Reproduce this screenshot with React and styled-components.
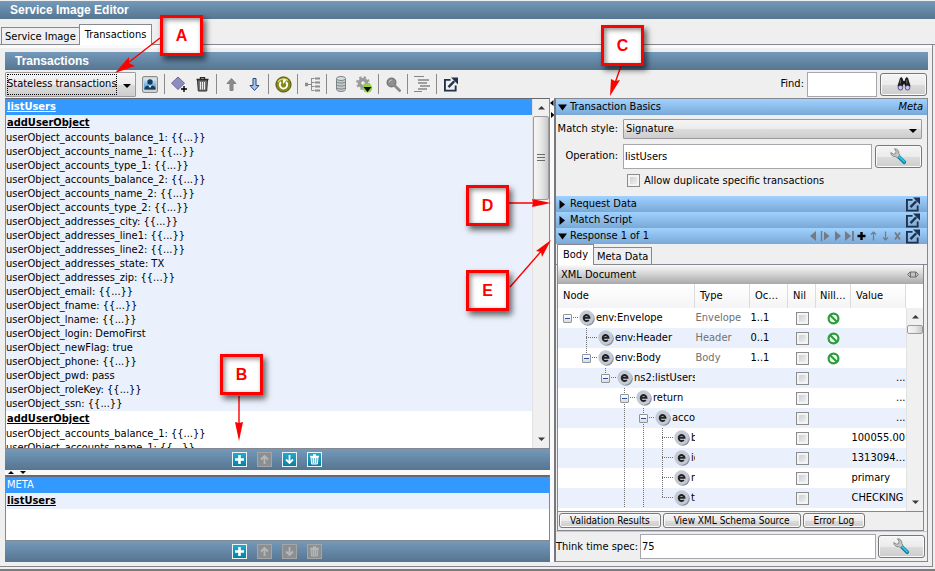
import React from "react";
import styled, { createGlobalStyle, css } from "styled-components";

const GlobalStyle = createGlobalStyle`
  * { box-sizing: border-box; }
  body {
    margin: 0;
    background: #efefef;
    color: #000;
    font: 11px/14px "DejaVu Sans Condensed", "DejaVu Sans", sans-serif;
  }
  button, input, select { font: inherit; color: inherit; margin: 0; }
  svg { display: block; flex: none; }
`;

const steel = "linear-gradient(#7499bb, #567590)";
const sky = "linear-gradient(#a0d2ff, #7aa8d6)";
const gloss = "linear-gradient(#f5f5f5 0%, #ebebeb 50%, #dcdcdc 51%, #cdcdcd 100%)";
const line = "#86888f";

/* ---------- frame ---------- */

const Window = styled.div`
  position: relative;
  display: flex;
  flex-direction: column;
  height: 100vh;
  min-height: 560px;
  padding-top: 1px;
  border-bottom: 2px solid #7c7c7c;
`;

const TitleBar = styled.header`
  flex: none;
  background: ${steel};
  color: #fff;
  font: bold 12px/18px "Liberation Sans", Arial, sans-serif;
  padding: 0 10px;
  height: 18px;
`;

const TabStrip = styled.div`
  display: flex;
  align-items: flex-end;
  flex: none;
  height: ${(p) => (p.$small ? "21px" : "26px")};
  padding-left: 1px;
  box-shadow: inset 0 -1px ${line};
`;

const Tab = styled.button`
  border: 1px solid ${line};
  border-bottom-width: ${(p) => (p.$active ? "0" : "1px")};
  margin-left: ${(p) => (p.$joined ? "-1px" : "0")};
  background: ${(p) => (p.$active ? "#fff" : "#efefef")};
  height: ${(p) => (p.$active ? "21px" : "18px")};
  padding: ${(p) => (p.$active ? "0 5px 1px" : "1px 3px 0")};
  line-height: 14px;
  white-space: nowrap;
`;

const Page = styled.main`
  flex: 1;
  min-height: 0;
  display: flex;
  flex-direction: column;
  margin-right: 2px;
  padding: 4px 4px 4px 5px;
  border-right: 1px solid ${line};
  border-bottom: 1px solid ${line};
  box-shadow: inset 0 3px #fbfbfb;
  margin-bottom: 2px;
`;

const SectionBar = styled(TitleBar)`
  margin-top: 3px;
`;

const Toolbar = styled.div`
  flex: none;
  display: flex;
  align-items: center;
  gap: 6px;
  height: 28px;
  padding-right: 1px;
`;

const Divider = styled.span`
  width: 1px;
  height: 20px;
  background: #8a8a8a;
`;

const ToolButton = styled.button`
  border: 0;
  padding: 0;
  background: none;
  flex: none;
  width: 16px;
  height: 18px;
  display: grid;
  grid-template-columns: 100%;
  place-items: center;
`;

const ToolGroup = styled.div`
  display: flex;
  align-items: center;
  gap: ${(p) => p.$gap || "7px"};
`;

const Spacer = styled.span`
  flex: 1;
`;

/* ---------- controls ---------- */

const SelectWrap = styled.div`
  position: relative;
  display: flex;
  flex: ${(p) => (p.$grow ? "1" : "none")};
  min-width: 0;
`;

const Select = styled.select`
  appearance: none;
  width: ${(p) => (p.$grow ? "100%" : "131px")};
  height: ${(p) => (p.$grow ? "20px" : "25px")};
  padding: ${(p) => (p.$grow ? "0 18px 0 2px" : "0 18px 0 1px")};
  border: 1px solid #9a9a9f;
  border-radius: 1px;
  background: ${gloss};
  outline: none;
`;

const FocusRing = styled.span`
  position: absolute;
  inset: 2px 19px 2px 2px;
  border: 1px dotted #000;
  pointer-events: none;
`;

const SelectArrow = styled.svg`
  position: absolute;
  right: 5px;
  top: 50%;
  pointer-events: none;
`;

const TextBox = styled.input`
  min-width: 0;
  flex: ${(p) => (p.$short ? "0 0 70px" : "1")};
  height: 25px;
  padding: 0 1px;
  border: 1px solid #a6a6ac;
  border-radius: 0;
  background: #fff;
`;

const GlossButton = styled.button`
  flex: none;
  display: grid;
  place-items: center;
  height: ${(p) => (p.$text ? "15px" : "23px")};
  width: ${(p) => (p.$text ? "auto" : "47px")};
  padding: ${(p) => (p.$text ? "0 10px" : "0")};
  font-size: ${(p) => (p.$text ? "10px" : "inherit")};
  line-height: 13px;
  white-space: nowrap;
  border: 1px solid #77777b;
  border-radius: 3px;
  box-shadow: inset 0 0 0 1px #fafafa;
  background: ${gloss};
`;

const CheckBox = styled.input.attrs({ type: "checkbox" })`
  appearance: none;
  display: block;
  flex: none;
  width: 13px;
  height: 13px;
  border: 1px solid #8c8c8c;
  background: linear-gradient(135deg, #c4c8ce, #f6f6f6);
  box-shadow: inset 0 0 0 2px #f4f4f4;
`;

/* ---------- split ---------- */

const Split = styled.div`
  flex: 1;
  min-height: 0;
  display: grid;
  grid-template-columns: minmax(0, 545fr) 4px minmax(0, 374fr);
`;

const LeftColumn = styled.div`
  display: flex;
  flex-direction: column;
  min-height: 0;
`;

const SplitHandle = styled.div`
  display: flex;
  flex-direction: ${(p) => (p.$row ? "row" : "column")};
  gap: 6px;
  padding: ${(p) => (p.$row ? "0 3px" : "2px 0")};
  height: ${(p) => (p.$row ? "5px" : "auto")};
  flex: none;
  background: #fafafa;
`;

const ListBox = styled.div`
  display: flex;
  min-height: 0;
  flex: ${(p) => (p.$grow ? "1" : "none")};
  height: ${(p) => (p.$grow ? "auto" : "66px")};
  border: 1px solid ${line};
  border-top: ${(p) => (p.$grow ? "1px" : "2px")} solid #66686e;
  background: #fff;
`;

const ListScroll = styled.div`
  flex: 1;
  min-width: 0;
  overflow: hidden;
`;

const Item = styled.div`
  white-space: nowrap;
  background: ${(p) => (p.$selected ? "#3399ff" : p.$tint ? "#eaf1fc" : "#fff")};
  color: ${(p) => (p.$selected ? "#fff" : "#000")};
`;

const ItemHead = styled.div`
  padding-left: 1px;
  line-height: 16px;
  font-weight: ${(p) => (p.$plain ? "normal" : "bold")};
  text-decoration: ${(p) => (p.$plain ? "none" : "underline")};
`;

const ActionBar = styled.div`
  flex: none;
  display: flex;
  justify-content: center;
  align-items: center;
  gap: 10px;
  height: 21px;
  padding-right: 2px;
  background: ${steel};
`;

const ActionButton = styled.button`
  width: 15px;
  height: 15px;
  padding: 0;
  display: grid;
  place-items: center;
  color: #fff;
  border: 1px solid #e8f4f8;
  background: linear-gradient(#25a9cb, #0a7fa3);
  &:disabled {
    color: #b4b8bb;
    border-color: #a3a5a7;
    background: #8c8f91;
  }
`;

/* ---------- scroll bar ---------- */

const ScrollTrack = styled.div`
  flex: none;
  display: flex;
  flex-direction: column;
  width: 17px;
  background: #f0f0f0;
  border-left: 1px solid #e2e2e2;
`;

const ScrollEnd = styled.button`
  flex: none;
  height: 17px;
  border: 0;
  padding: 0;
  background: none;
  display: grid;
  place-items: center;
`;

const ScrollThumb = styled.div`
  flex: none;
  height: ${(p) => (p.$long ? "84px" : "9px")};
  border: 1px solid #9b9b9b;
  border-radius: 2px;
  background: linear-gradient(90deg, #f6f6f6, #e8e8e8 50%, #c8c8cc);
  display: grid;
  place-items: center;
`;

/* ---------- right panel ---------- */

const RightPanel = styled.div`
  display: flex;
  flex-direction: column;
  min-height: 0;
  border: 1px solid ${line};
  border-left: 2px solid #77797f;
`;

const FoldBar = styled.div`
  flex: none;
  display: flex;
  align-items: center;
  height: 16px;
  padding: 0 4px 0 2px;
  background: ${sky};
`;

const FoldToggle = styled.button`
  display: flex;
  align-items: center;
  gap: 3px;
  padding: 0;
  border: 0;
  background: none;
  line-height: 16px;
`;

const FoldAction = styled.button`
  margin-right: 3px;
  padding: 0;
  border: 0;
  background: none;
`;

const MetaLink = styled.a`
  color: #000;
  font-style: italic;
  text-decoration: none;
`;

const NavTools = styled.div`
  display: flex;
  align-items: center;
  gap: 1px;
  margin-right: 3px;
`;

const NavButton = styled.button`
  width: 11px;
  height: 14px;
  padding: 0;
  border: 0;
  background: none;
  display: grid;
  place-items: center;
`;

const Form = styled.div`
  flex: none;
  display: grid;
  grid-template-columns: 62px minmax(0, 1fr);
  gap: 4px 5px;
  align-items: center;
  padding: 3px 5px 8px 0;
  height: 81px;
`;

const FieldLabel = styled.label`
  text-align: right;
  white-space: nowrap;
`;

const FieldRow = styled.div`
  display: flex;
  align-items: center;
  gap: 3px;
  min-width: 0;
`;

const CheckLabel = styled.label`
  display: flex;
  align-items: center;
  gap: 4px;
  padding-left: 4px;
`;

const Document = styled.div`
  flex: 1;
  min-height: 0;
  display: flex;
  flex-direction: column;
  margin: 0 3px 0 1px;
  border: 1px solid ${line};
  border-top: 0;
`;

const DocumentTitle = styled.div`
  flex: none;
  display: flex;
  align-items: center;
  justify-content: space-between;
  height: 19px;
  padding: 0 4px 0 3px;
  background: linear-gradient(#fafafa, #a9a9ab);
`;

const Tree = styled.div`
  flex: 1;
  min-height: 0;
  display: flex;
  background: #fff;
  border-bottom: 1px solid ${line};
`;

const TreeBody = styled.div`
  flex: 1;
  min-width: 0;
  overflow: hidden;
`;

const TreeSide = styled.div`
  flex: none;
  display: flex;
  padding-top: 24px;
`;

const Table = styled.table`
  width: 100%;
  table-layout: fixed;
  border-collapse: collapse;
`;

const Th = styled.th`
  width: ${(p) => p.$width};
  height: 24px;
  padding: ${(p) => (p.$snug ? "0 0 0 4px" : "0 4px 0 5px")};
  font-weight: normal;
  text-align: left;
  white-space: nowrap;
  overflow: hidden;
  text-overflow: ellipsis;
  border-right: 1px solid #dcdcdc;
  background: linear-gradient(#fff, #f4f4f6);
`;

const Tr = styled.tr`
  height: 20px;
  background: ${(p) => (p.$tint ? "#eaf1fc" : "#fff")};
`;

const Td = styled.td`
  height: 20px;
  padding: 0 0 0 1px;
  white-space: nowrap;
  overflow: hidden;
  text-align: ${(p) => p.$align || "left"};
  text-overflow: ellipsis;
  color: ${(p) => (p.$dim ? "#707070" : "#000")};
  input, svg { margin: 0 auto; }
`;

const NodeCell = styled(Td)`
  padding: 0;
  text-overflow: clip;
`;

const NodeLine = styled.div`
  display: flex;
  align-items: center;
  height: 20px;
  overflow: hidden;
`;

const dots = "#6f6f6f";

const Guide = styled.span`
  position: relative;
  flex: none;
  display: grid;
  place-items: center;
  width: 19px;
  height: 20px;
  ${(p) =>
    p.$down &&
    css`
      &::before {
        content: "";
        position: absolute;
        left: 9px;
        top: 0;
        width: 1px;
        height: ${p.$down === "half" ? "10px" : "20px"};
        background: repeating-linear-gradient(${dots} 0 1px, transparent 1px 2px);
      }
    `}
  ${(p) =>
    p.$across &&
    css`
      &::after {
        content: "";
        position: absolute;
        left: 9px;
        top: 9px;
        width: 11px;
        height: 1px;
        background: repeating-linear-gradient(90deg, ${dots} 0 1px, transparent 1px 2px);
      }
    `}
`;

const Expander = styled.button`
  position: relative;
  z-index: 1;
  width: 9px;
  height: 9px;
  padding: 0;
  display: grid;
  place-items: center;
  border: 1px solid #8f959c;
  border-radius: 1px;
  background: linear-gradient(#fff, #dcdcdc);
`;

const ButtonRow = styled.div`
  flex: none;
  display: flex;
  gap: 2px;
  padding: 1px;
  height: 18px;
`;

const ThinkTime = styled.div`
  flex: none;
  display: flex;
  align-items: center;
  gap: 2px;
  height: 30px;
  padding-right: 2px;
  border-top: 1px solid #c8c8c8;
`;

const ThinkLabel = styled.label`
  white-space: nowrap;
`;

/* ---------- callouts ---------- */

const Annotations = styled.div`
  position: absolute;
  inset: 0;
  pointer-events: none;
`;

const Arrows = styled.svg`
  position: absolute;
  left: 0;
  top: 0;
`;

const Callout = styled.span`
  position: absolute;
  left: ${(p) => p.$x}px;
  top: ${(p) => p.$y}px;
  width: 43px;
  height: 41px;
  display: grid;
  place-items: center;
  border: 3px solid #f00;
  background: #fff;
  box-shadow: inset 2px 2px 5px rgba(0, 0, 0, 0.45), 3px 4px 6px rgba(0, 0, 0, 0.6);
  color: #f00;
  font: bold 16px/20px "Liberation Sans", Arial, sans-serif;
`;

/* ---------- icons ---------- */

const Triangle = ({ down }) => (
  <svg width="9" height="9" viewBox="0 0 9 9">
    <path d={down ? "M0 1.5h9L4.5 7.5z" : "M1.5 0v9L7 4.5z"} />
  </svg>
);

const SmallTriangle = ({ dir }) => (
  <svg width="6" height="6" viewBox="0 0 6 6">
    <path
      d={{ up: "M0 4h6L3 1z", down: "M0 1h6L3 4z", left: "M3.5 0v6L0 3z", right: "M1 0v6l3.5-3z" }[dir]}
    />
  </svg>
);

const ScrollArrow = ({ up }) => (
  <svg width="7" height="5" viewBox="0 0 7 5">
    <path fill="#3a3a3a" d={up ? "M0 4.5h7L3.5 1z" : "M0 .5h7L3.5 4z"} />
  </svg>
);

const UserIcon = () => (
  <svg width="16" height="17" viewBox="0 0 16 17">
    <defs>
      <linearGradient id="user" x2="0" y2="1">
        <stop offset="0" stopColor="#d6eefa" />
        <stop offset="1" stopColor="#3a8cc4" />
      </linearGradient>
    </defs>
    <rect x=".5" y=".5" width="15" height="16" rx="1.5" fill="#d2d2d2" stroke="#8b8b8b" />
    <rect x="2" y="2.500" width="12" height="11" fill="url(#user)" />
    <circle cx="8" cy="6" r="2.700" fill="#17395f" />
    <path d="M2.500 13.500c0-3 2-4.300 5.500-4.300s5.500 1.300 5.500 4.300z" fill="#17395f" />
    <path d="M6 9.300h4L8 12z" fill="#d9eef9" />
  </svg>
);

const AddNodeIcon = () => (
  <svg width="17" height="17" viewBox="0 0 17 17">
    <path d="M7 1l6.500 6.200L7 13.500.5 7.200z" fill="#8e8cbc" stroke="#69679c" />
    <path d="M13 10v6M10 13h6" stroke="#efefef" strokeWidth="3" />
    <path d="M13 10v6M10 13h6" stroke="#000" strokeWidth="1.400" />
  </svg>
);

const TrashIcon = () => (
  <svg width="13" height="15" viewBox="0 0 13 15" fill="none" stroke="#2b2b2b">
    <path d="M.5 2.500h12M4.500 2V.6h4V2" strokeWidth="1.300" />
    <path d="M1.500 3l.8 11h8.400l.8-11z" fill="#777" />
    <path d="M4.500 5v7.500M6.500 5v7.500M8.500 5v7.500" stroke="#eee" />
  </svg>
);

const BlockArrow = ({ up, active }) => (
  <svg width="13" height="15" viewBox="0 0 13 15">
    <path
      d={up ? "M6.500 1.500L2 6.500h3v7h3v-7h3z" : "M6.500 13.500L2 8.500h3v-7h3v7h3z"}
      fill={active ? "#a9c5ec" : "#8c8c8c"}
      stroke={active ? "#26457f" : "#838383"}
    />
  </svg>
);

const RefreshIcon = () => (
  <svg width="17" height="17" viewBox="0 0 17 17">
    <circle cx="8.500" cy="8.500" r="7.600" fill="#85881a" stroke="#4f520f" />
    <path d="M3 6a6.500 6.500 0 0 1 10-1.500" fill="none" stroke="#d6da74" strokeWidth="1.300" />
    <path d="M11 6a3.700 3.700 0 1 1-5 0" fill="none" stroke="#fff" strokeWidth="1.900" />
    <path d="M7.800 3l3.800.8L8.200 8z" fill="#fff" />
  </svg>
);

const HierarchyIcon = () => (
  <svg width="15" height="15" viewBox="0 0 15 15" stroke="#8c8c8c" fill="none">
    <path d="M3 7.500h4M6.500 1v12.500M6.500 1.500h3M6.500 5.500h3M6.500 9.500h3M6.500 13.500h3" />
    <path d="M10 1.500h5M10 5.500h5M10 9.500h5M10 13.500h5" strokeWidth="1.800" />
    <path d="M0 7.500h3" strokeWidth="3.500" />
  </svg>
);

const DatabaseIcon = () => (
  <svg width="10" height="16" viewBox="0 0 10 16" stroke="#7d8485">
    <path d="M.5 2.500v11c0 1 2 2 4.500 2s4.500-1 4.500-2v-11z" fill="#c3cacb" />
    <path d="M.5 5.500c0 1 2 1.500 4.500 1.500s4.500-.5 4.500-1.500M.5 8.500C.5 9.500 2.500 10 5 10s4.500-.5 4.500-1.500M.5 11.500c0 1 2 1.500 4.500 1.500s4.500-.5 4.500-1.500" fill="none" />
    <ellipse cx="5" cy="2.500" rx="4.500" ry="2" fill="#d9dede" />
  </svg>
);

const GearIcon = () => (
  <svg width="17" height="17" viewBox="0 0 17 17">
    <circle cx="7" cy="7" r="5.500" fill="none" stroke="#9b9b9b" strokeWidth="2.800" strokeDasharray="2.200 2.120" />
    <circle cx="7" cy="7" r="3.500" fill="none" stroke="#9b9b9b" strokeWidth="3.400" />
    <circle cx="11.500" cy="12" r="4.700" fill="#90d33a" />
    <path d="M7.500 11h8l-4 5z" />
  </svg>
);

const SearchIcon = () => (
  <svg width="15" height="15" viewBox="0 0 15 15">
    <circle cx="5.500" cy="5.500" r="4.300" fill="#8f8f8f" stroke="#7b7b7b" strokeWidth="1.400" />
    <path d="M3.300 5a2.500 2.500 0 0 1 2.500-2" fill="none" stroke="#ccc" />
    <path d="M9 9l4.600 4.600" stroke="#8b8b8b" strokeWidth="2.800" strokeLinecap="round" />
  </svg>
);

const OutlineIcon = () => (
  <svg width="17" height="16" viewBox="0 0 17 16" stroke="#858585">
    <path d="M0 .5h10M0 15.500h8" />
    <path d="M4 4h11M4 7h9M6 10h10M4 13h9" strokeWidth="1.400" />
  </svg>
);

const PopOutIcon = () => (
  <svg width="14" height="15" viewBox="0 0 15 15" fill="none" stroke="#22304a" strokeWidth="2">
    <path d="M7 2.500H1v11.500h11.500V8.500" />
    <path d="M4.800 10.200L11 4" strokeWidth="2.600" />
    <path d="M7.500 0H15v7.500z" fill="#22304a" stroke="none" />
  </svg>
);

const BinocularsIcon = () => (
  <svg width="14" height="14" viewBox="0 0 15 15">
    <path d="M3 1.500L4.500 0 6.300 2l.3 8H.4L2 5zM12 1.500L10.500 0 8.700 2l-.3 8h6.200L13 5z" fill="#1b1b1b" />
    <path d="M6 4h3v4H6z" fill="#1b1b1b" />
    <path d="M3.500 3v4M10.500 3v4" stroke="#777" />
    <circle cx="3.700" cy="11.500" r="2.500" fill="#c9c6ee" stroke="#4c4880" />
    <circle cx="11.300" cy="11.500" r="2.500" fill="#c9c6ee" stroke="#4c4880" />
  </svg>
);

const WrenchIcon = () => (
  <svg width="17" height="17" viewBox="0 0 17 17">
    <path d="M9 9l5.200 5.200" stroke="#0c7fa0" strokeWidth="3.800" strokeLinecap="round" />
    <path d="M9 8.500l5.200 5.200" stroke="#2fc4e6" strokeWidth="1.800" strokeLinecap="round" />
    <path d="M4.500.8a4 4 0 0 1 4.300 4.700L10 7.200 7.500 9.700 5.500 8.600A4 4 0 0 1 .8 4.500l2.600 1.700 2.300-.6.3-2.300z" fill="#c3c7c8" stroke="#73797b" strokeWidth=".8" />
  </svg>
);

const ElementIcon = () => (
  <svg width="16" height="16" viewBox="0 0 16 16">
    <circle cx="8.800" cy="8.800" r="7" fill="#8b909a" />
    <circle cx="7.600" cy="7.600" r="7.300" fill="#c3cad6" />
    <path d="M4.700 7.700h5.800a2.900 3 0 1 0-.7 2.300" fill="none" stroke="#222" strokeWidth="1.900" />
  </svg>
);

const ForbiddenIcon = () => (
  <svg width="13" height="13" viewBox="0 0 13 13" fill="none" stroke="#2c9c3c" strokeWidth="2.200">
    <circle cx="6.500" cy="6.500" r="4.900" fill="#f2fff2" />
    <path d="M3.200 3.200l6.600 6.600" />
  </svg>
);

const CapsuleIcon = () => (
  <svg width="12" height="7" viewBox="0 0 12 7" fill="#c2c2c2" stroke="#6e6e6e">
    <path d="M.6 3.500L3 1h6l2.400 2.500L9 6H3z" />
    <path d="M3.500 1v5M8.500 1v5" />
  </svg>
);

const Glyph = ({ d, width = 2 }) => (
  <svg width="11" height="11" viewBox="0 0 11 11" fill="none" stroke="currentColor" strokeWidth={width}>
    <path d={d} />
  </svg>
);

const BinGlyph = () => (
  <svg width="11" height="11" viewBox="0 0 11 11" fill="none" stroke="currentColor">
    <path d="M1 2.500h9M4 1h3" strokeWidth="1.400" />
    <path d="M2 3.500l.6 6.500h5.800L9 3.500z" fill="currentColor" fillOpacity=".45" />
    <path d="M4.500 4v5M6.500 4v5" />
  </svg>
);

const NavIcon = ({ shape }) => (
  <svg width="11" height="12" viewBox="0 0 11 12" fill="none" stroke="#757a82" strokeWidth="1.400">
    {shape === "prev" && <path d="M8 1v10L2 6z" fill="#757a82" stroke="none" />}
    {shape === "step" && (
      <>
        <path d="M1.500 1v10" />
        <path d="M4 1.500v9L9.500 6z" fill="#757a82" stroke="none" />
      </>
    )}
    {shape === "next" && <path d="M3 1v10l6-5z" fill="#757a82" stroke="none" />}
    {shape === "last" && (
      <>
        <path d="M1 1v10l6-5z" fill="#757a82" stroke="none" />
        <path d="M9 1v10" strokeWidth="1.800" />
      </>
    )}
    {shape === "add" && <path d="M5.500 2v8M1.500 6h8" stroke="#000" strokeWidth="2.400" />}
    {shape === "up" && <path d="M5.500 10.500V2.500M3 4.500L5.500 2 8 4.500" strokeWidth="1.200" />}
    {shape === "down" && <path d="M5.500 1.500v8M3 7.500L5.500 10 8 7.500" strokeWidth="1.200" />}
    {shape === "remove" && <path d="M3 2.500l5 7M8 2.500l-5 7" strokeWidth="1.800" />}
  </svg>
);

/* ---------- data ---------- */

const userFields = [
  "userObject_accounts_balance_1: {{...}}",
  "userObject_accounts_name_1: {{...}}",
  "userObject_accounts_type_1: {{...}}",
  "userObject_accounts_balance_2: {{...}}",
  "userObject_accounts_name_2: {{...}}",
  "userObject_accounts_type_2: {{...}}",
  "userObject_addresses_city: {{...}}",
  "userObject_addresses_line1: {{...}}",
  "userObject_addresses_line2: {{...}}",
  "userObject_addresses_state: TX",
  "userObject_addresses_zip: {{...}}",
  "userObject_email: {{...}}",
  "userObject_fname: {{...}}",
  "userObject_lname: {{...}}",
  "userObject_login: DemoFirst",
  "userObject_newFlag: true",
  "userObject_phone: {{...}}",
  "userObject_pwd: pass",
  "userObject_roleKey: {{...}}",
  "userObject_ssn: {{...}}",
];

const transactions = [
  { name: "addUserObject", fields: userFields },
  { name: "addUserObject", fields: userFields.slice(0, 2) },
];

/* guides: one entry per indent level — "" blank, "full" passing line, "half" line that ends at this row */
const nodes = [
  { name: "env:Envelope", type: "Envelope", occurs: "1..1", nillable: true, guides: [""], open: true },
  { name: "env:Header", type: "Header", occurs: "0..1", nillable: true, guides: ["", "full"] },
  { name: "env:Body", type: "Body", occurs: "1..1", nillable: true, guides: ["", "half"], open: true },
  { name: "ns2:listUsers", guides: ["", "", "half"], open: true, more: true },
  { name: "return", guides: ["", "", "", "full"], open: true, more: true },
  { name: "accounts", guides: ["", "", "", "full", "full"], open: true, more: true },
  { name: "balance", guides: ["", "", "", "full", "full", "full"], value: "100055.00" },
  { name: "id", guides: ["", "", "", "full", "full", "full"], value: "1313094586" },
  { name: "name", guides: ["", "", "", "full", "full", "full"], value: "primary" },
  { name: "type", guides: ["", "", "", "full", "full", "half"], value: "CHECKING" },
];

/* ---------- parts ---------- */

const ScrollBar = ({ long }) => (
  <ScrollTrack>
    <ScrollEnd aria-label="Scroll up">
      <ScrollArrow up />
    </ScrollEnd>
    <ScrollThumb $long={long}>
      {long && (
        <svg width="8" height="8" viewBox="0 0 8 8" stroke="#6a6a6a">
          <path d="M0 .5h8M0 3.500h8M0 6.500h8" />
        </svg>
      )}
    </ScrollThumb>
    <Spacer />
    <ScrollEnd aria-label="Scroll down">
      <ScrollArrow />
    </ScrollEnd>
  </ScrollTrack>
);

const Actions = ({ movable }) => (
  <ActionBar>
    <ActionButton aria-label="Add">
      <Glyph d="M5.500 1v9M1 5.500h9" width={2.6} />
    </ActionButton>
    <ActionButton aria-label="Move up" disabled>
      <Glyph d="M5.500 10V2M2 5.500L5.500 2 9 5.500" width={1.8} />
    </ActionButton>
    <ActionButton aria-label="Move down" disabled={!movable}>
      <Glyph d="M5.500 1v8M2 5.500L5.500 9 9 5.500" width={1.8} />
    </ActionButton>
    <ActionButton aria-label="Delete" disabled={!movable}>
      <BinGlyph />
    </ActionButton>
  </ActionBar>
);

const Fold = ({ title, open, children }) => (
  <FoldBar>
    <FoldToggle aria-expanded={!!open}>
      <Triangle down={open} />
      {title}
    </FoldToggle>
    <Spacer />
    {children}
  </FoldBar>
);

const FoldPopOut = () => (
  <FoldAction aria-label="Open in window">
    <PopOutIcon />
  </FoldAction>
);

const NodeRow = ({ node, tint }) => (
  <Tr $tint={tint}>
    <NodeCell>
      <NodeLine>
        {node.guides.map((g, i) => {
          const last = i === node.guides.length - 1;
          return (
            <Guide key={i} $down={g} $across={last}>
              {last && node.open && (
                <Expander aria-label="Collapse">
                  <svg width="5" height="1" viewBox="0 0 5 1">
                    <path d="M0 .5h5" stroke="#2b4fa0" />
                  </svg>
                </Expander>
              )}
            </Guide>
          );
        })}
        <Guide>
          <ElementIcon />
        </Guide>
        {node.name}
      </NodeLine>
    </NodeCell>
    <Td $dim>{node.type}</Td>
    <Td>{node.occurs}</Td>
    <Td>
      <CheckBox aria-label={`${node.name} nil`} />
    </Td>
    <Td>{node.nillable && <ForbiddenIcon />}</Td>
    <Td $align={node.more ? "right" : "left"}>{node.more ? "..." : node.value}</Td>
  </Tr>
);

const navShapes = ["prev", "step", "next", "last", "add", "up", "down", "remove"];

export default function App() {
  return (
    <Window>
      <GlobalStyle />
      <TitleBar>Service Image Editor</TitleBar>
      <TabStrip>
        <Tab>Service Image</Tab>
        <Tab $active $joined>
          Transactions
        </Tab>
      </TabStrip>
      <Page>
        <SectionBar as="div">Transactions</SectionBar>
        <Toolbar>
          <SelectWrap>
            <Select aria-label="Transaction kind" defaultValue="s">
              <option value="s">Stateless transactions</option>
            </Select>
            <FocusRing />
            <SelectArrow width="8" height="4" viewBox="0 0 8 4">
              <path d="M0 0h8L4 4z" />
            </SelectArrow>
          </SelectWrap>
          <ToolButton aria-label="User">
            <UserIcon />
          </ToolButton>
          <Divider />
          <ToolGroup>
            <ToolButton aria-label="Add transaction">
              <AddNodeIcon />
            </ToolButton>
            <ToolButton aria-label="Delete transaction">
              <TrashIcon />
            </ToolButton>
          </ToolGroup>
          <Divider />
          <ToolGroup>
            <ToolButton aria-label="Move up">
              <BlockArrow up />
            </ToolButton>
            <ToolButton aria-label="Move down">
              <BlockArrow active />
            </ToolButton>
          </ToolGroup>
          <Divider />
          <ToolButton aria-label="Regenerate">
            <RefreshIcon />
          </ToolButton>
          <Divider />
          <ToolButton aria-label="Hierarchy">
            <HierarchyIcon />
          </ToolButton>
          <Divider />
          <ToolGroup>
            <ToolButton aria-label="Database">
              <DatabaseIcon />
            </ToolButton>
            <ToolButton aria-label="Settings">
              <GearIcon />
            </ToolButton>
          </ToolGroup>
          <Divider />
          <ToolButton aria-label="Inspect">
            <SearchIcon />
          </ToolButton>
          <Divider />
          <ToolButton aria-label="Outline">
            <OutlineIcon />
          </ToolButton>
          <Divider />
          <ToolButton aria-label="Open in window">
            <PopOutIcon />
          </ToolButton>
          <Spacer />
          <ToolGroup $gap="3px">
            <label htmlFor="find">Find:</label>
            <TextBox id="find" $short />
            <GlossButton aria-label="Find">
              <BinocularsIcon />
            </GlossButton>
          </ToolGroup>
        </Toolbar>
        <Split>
          <LeftColumn>
            <ListBox $grow>
              <ListScroll>
                <Item $selected>
                  <ItemHead>listUsers</ItemHead>
                </Item>
                {transactions.map((t, i) => (
                  <Item key={i} $tint={i % 2 === 0}>
                    <ItemHead>{t.name}</ItemHead>
                    {t.fields.map((f) => (
                      <div key={f}>{f}</div>
                    ))}
                  </Item>
                ))}
              </ListScroll>
              <ScrollBar long />
            </ListBox>
            <Actions movable />
            <SplitHandle $row>
              <SmallTriangle dir="up" />
              <SmallTriangle dir="down" />
            </SplitHandle>
            <ListBox>
              <ListScroll>
                <Item $selected>
                  <ItemHead $plain>META</ItemHead>
                </Item>
                <Item $tint>
                  <ItemHead>listUsers</ItemHead>
                </Item>
              </ListScroll>
            </ListBox>
            <Actions />
          </LeftColumn>
          <SplitHandle>
            <SmallTriangle dir="left" />
            <SmallTriangle dir="right" />
          </SplitHandle>
          <RightPanel>
            <Fold title="Transaction Basics" open>
              <MetaLink href="#meta">Meta</MetaLink>
            </Fold>
            <Form>
              <FieldLabel htmlFor="style">Match style:</FieldLabel>
              <SelectWrap $grow>
                <Select id="style" $grow defaultValue="sig">
                  <option value="sig">Signature</option>
                </Select>
                <SelectArrow width="8" height="4" viewBox="0 0 8 4">
                  <path d="M0 0h8L4 4z" />
                </SelectArrow>
              </SelectWrap>
              <FieldLabel htmlFor="operation">Operation:</FieldLabel>
              <FieldRow>
                <TextBox id="operation" defaultValue="listUsers" />
                <GlossButton aria-label="Edit operation">
                  <WrenchIcon />
                </GlossButton>
              </FieldRow>
              <span />
              <CheckLabel>
                <CheckBox />
                Allow duplicate specific transactions
              </CheckLabel>
            </Form>
            <Fold title="Request Data">
              <FoldPopOut />
            </Fold>
            <Fold title="Match Script">
              <FoldPopOut />
            </Fold>
            <Fold title="Response 1 of 1" open>
              <NavTools>
                {navShapes.map((s) => (
                  <NavButton key={s} aria-label={s}>
                    <NavIcon shape={s} />
                  </NavButton>
                ))}
              </NavTools>
              <FoldPopOut />
            </Fold>
            <TabStrip $small>
              <Tab $active>Body</Tab>
              <Tab $joined>Meta Data</Tab>
            </TabStrip>
            <Document>
              <DocumentTitle>
                XML Document
                <CapsuleIcon />
              </DocumentTitle>
              <Tree>
                <TreeBody>
                  <Table>
                    <thead>
                      <tr>
                        <Th>Node</Th>
                        <Th $width="55px">Type</Th>
                        <Th $width="38px">Occurs</Th>
                        <Th $width="28px">Nil</Th>
                        <Th $width="35px" $snug>Nillable</Th>
                        <Th $width="55px">Value</Th>
                      </tr>
                    </thead>
                    <tbody>
                      {nodes.map((n, i) => (
                        <NodeRow key={n.name} node={n} tint={i % 2 === 1} />
                      ))}
                    </tbody>
                  </Table>
                </TreeBody>
                <TreeSide>
                  <ScrollBar />
                </TreeSide>
              </Tree>
              <ButtonRow>
                <GlossButton $text>Validation Results</GlossButton>
                <GlossButton $text>View XML Schema Source</GlossButton>
                <GlossButton $text>Error Log</GlossButton>
              </ButtonRow>
            </Document>
            <ThinkTime>
              <ThinkLabel htmlFor="think">Think time spec:</ThinkLabel>
              <TextBox id="think" defaultValue="75" />
              <GlossButton aria-label="Edit think time">
                <WrenchIcon />
              </GlossButton>
            </ThinkTime>
          </RightPanel>
        </Split>
      </Page>
      <Annotations>
        <Arrows width="935" height="571" viewBox="0 0 935 571" stroke="#f00" fill="#f00" strokeWidth="1.4">
          <path d="M160 38L124 66M621 66l-7 20M239 396v32M509 203h30M510 287l34-39" fill="none" />
          <g stroke="none">
            <path d="M115 73l14-16 0 6 6 3z" />
            <path d="M610 96l1-17 4 2 5-1z" />
            <path d="M239 441l-4-19 4 1 4-1z" />
            <path d="M551 203l-19-4 1 4-1 4z" />
            <path d="M551 240l-15 11 5 1 1 5z" />
          </g>
        </Arrows>
        <Callout $x={160} $y={15}>A</Callout>
        <Callout $x={220} $y={354}>B</Callout>
        <Callout $x={601} $y={25}>C</Callout>
        <Callout $x={466} $y={185}>D</Callout>
        <Callout $x={466} $y={270}>E</Callout>
      </Annotations>
    </Window>
  );
}
